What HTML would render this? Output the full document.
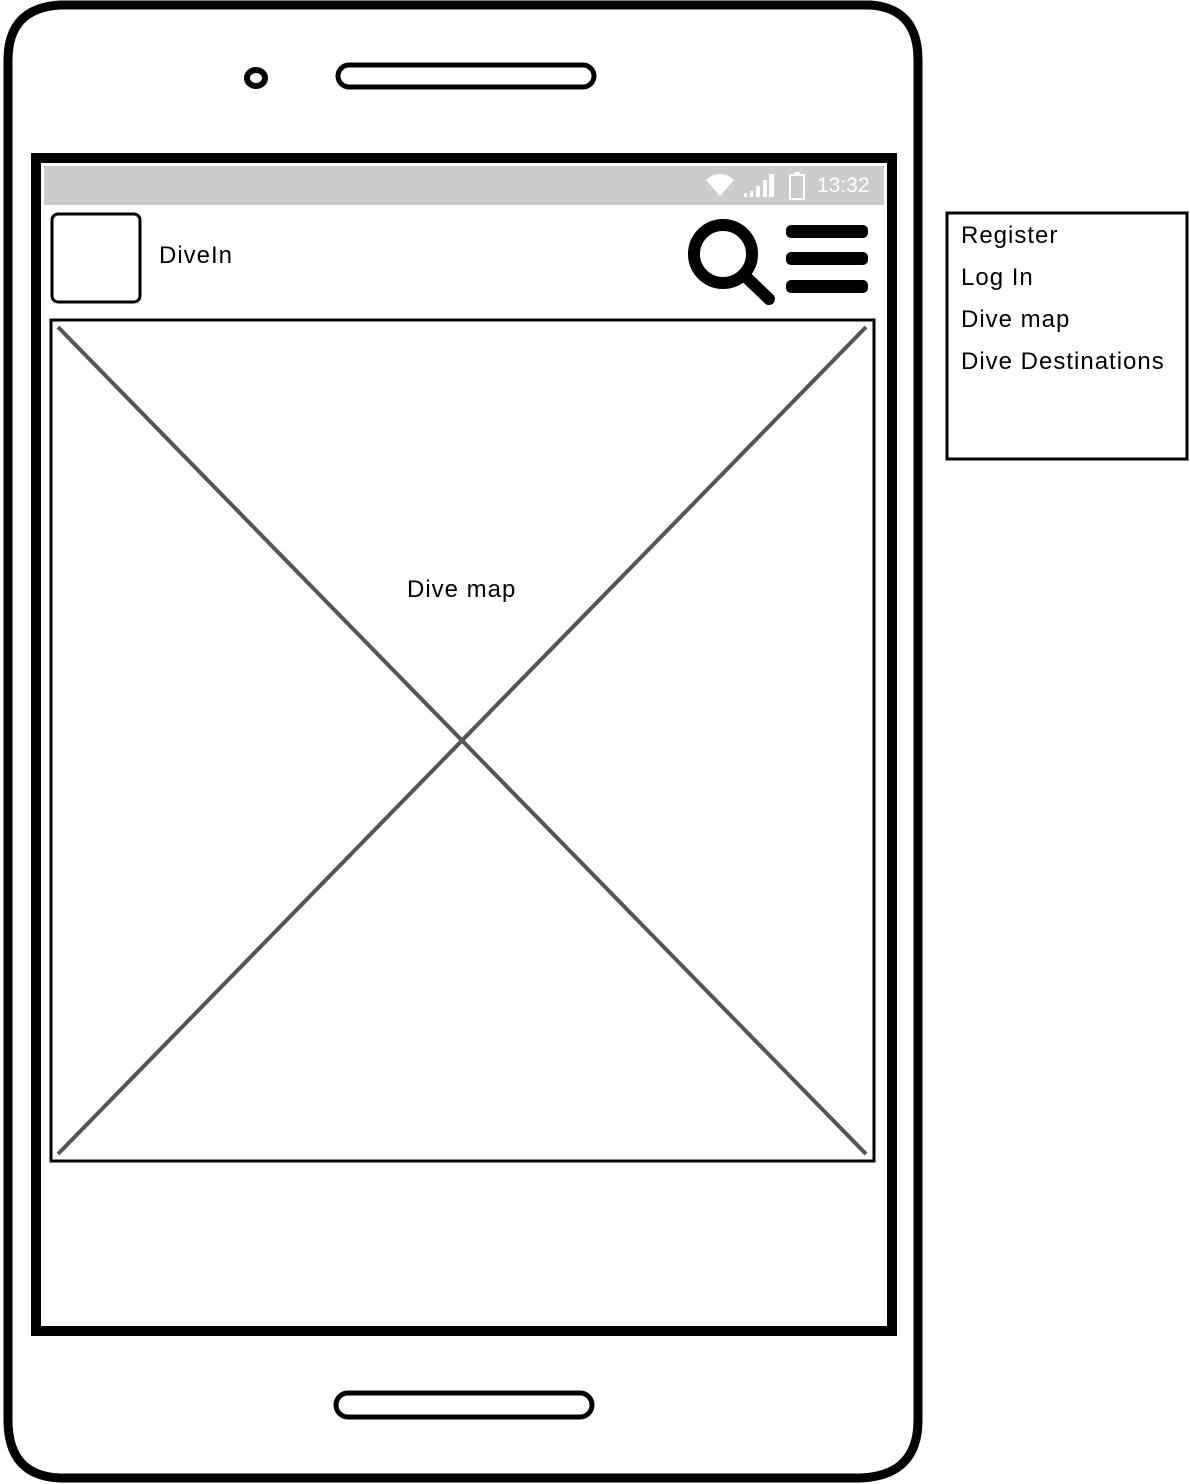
<!DOCTYPE html>
<html><head><meta charset="utf-8"><style>
html,body{margin:0;padding:0;background:#fff;width:1190px;height:1484px;overflow:hidden;font-family:"Liberation Sans",sans-serif}
.t{position:absolute;color:#000;font-size:24px;letter-spacing:1px}
</style></head><body>
<svg width="1190" height="1484" style="position:absolute;left:0;top:0">
 <path d="M60 5 L870 5 Q918 8 918 60 L918 1420 Q918 1476 860 1478 L60 1478 Q8 1476 8 1420 L8 60 Q8 8 60 5 Z" fill="none" stroke="#000" stroke-width="9"/>
 <ellipse cx="256" cy="78" rx="9" ry="8" fill="none" stroke="#000" stroke-width="6"/>
 <rect x="338" y="65" width="256" height="22" rx="11" fill="none" stroke="#000" stroke-width="5"/>
 <rect x="336" y="1393" width="256" height="24" rx="12" fill="none" stroke="#000" stroke-width="5"/>
 <rect x="36" y="158" width="856" height="1173" fill="none" stroke="#000" stroke-width="10"/>
 <rect x="44" y="166" width="840" height="39" fill="#ccc"/>
 <path d="M706 180 Q720 168 734 180 L720 196 Z" fill="#fff"/>
 <rect x="744" y="193" width="3" height="4" fill="#fff"/>
 <rect x="750" y="191" width="3" height="6" fill="#fff"/>
 <rect x="756" y="186" width="4" height="11" fill="#fff"/>
 <rect x="763" y="180" width="4" height="17" fill="#fff"/>
 <rect x="769" y="174" width="5" height="23" fill="#fff"/>
 <rect x="790" y="175" width="14" height="24" fill="none" stroke="#fff" stroke-width="2"/>
 <rect x="794" y="172" width="6" height="3" fill="#fff"/>
 <rect x="52" y="214" width="88" height="88" rx="6" fill="none" stroke="#000" stroke-width="3"/>
 <circle cx="723" cy="254" r="29" fill="none" stroke="#000" stroke-width="12"/>
 <line x1="744" y1="275" x2="769" y2="299" stroke="#000" stroke-width="12" stroke-linecap="round"/>
 <rect x="786" y="225" width="82" height="13" rx="5" fill="#000"/>
 <rect x="786" y="252" width="82" height="13" rx="5" fill="#000"/>
 <rect x="786" y="280" width="82" height="13" rx="5" fill="#000"/>
 <rect x="51" y="320" width="823" height="841" fill="none" stroke="#000" stroke-width="3"/>
 <line x1="58" y1="327" x2="866" y2="1154" stroke="#555" stroke-width="4"/>
 <line x1="866" y1="327" x2="58" y2="1154" stroke="#555" stroke-width="4"/>
 <rect x="947" y="213" width="240" height="246" fill="none" stroke="#000" stroke-width="3"/>
</svg>
<div class="t" style="left:817px;top:174px;color:#fff;font-size:21px;letter-spacing:0">13:32</div>
<div class="t" style="left:159px;top:242px">DiveIn</div>
<div class="t" style="left:407px;top:576px">Dive map</div>
<div class="t" style="left:961px;top:222px">Register</div>
<div class="t" style="left:961px;top:264px">Log In</div>
<div class="t" style="left:961px;top:306px">Dive map</div>
<div class="t" style="left:961px;top:348px">Dive Destinations</div>
</body></html>
